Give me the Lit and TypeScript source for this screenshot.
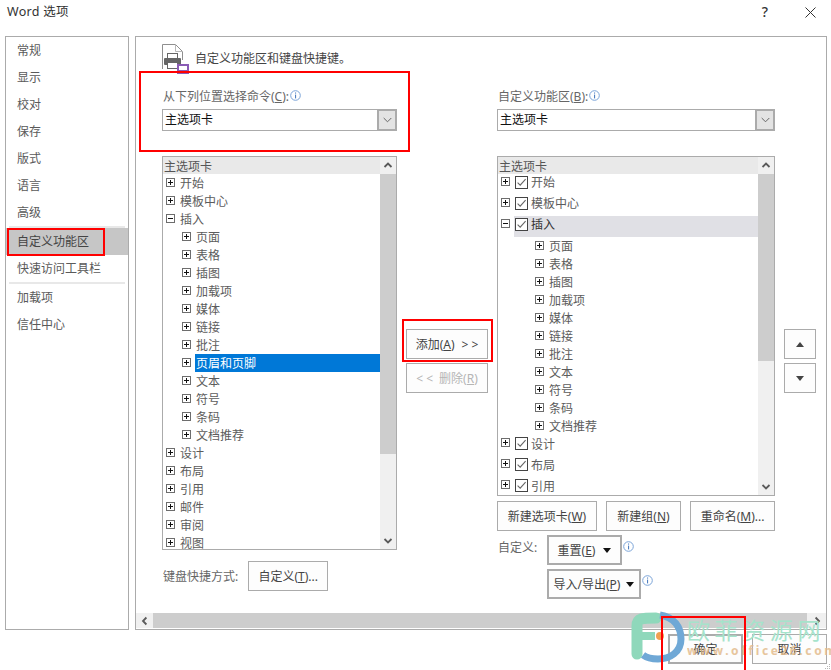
import { LitElement, html, css, svg, nothing } from "lit";
import { customElement } from "lit/decorators.js";

const NAV1 = ["常规", "显示", "校对", "保存", "版式", "语言", "高级"];
const SUB = ["页面", "表格", "插图", "加载项", "媒体", "链接", "批注", "页眉和页脚", "文本", "符号", "条码", "文档推荐"];
const SUB_R = SUB.filter((s) => s !== "页眉和页脚");
const TOP_BEFORE = ["开始", "模板中心"];
const TOP_AFTER_L = ["设计", "布局", "引用", "邮件", "审阅", "视图"];
const TOP_AFTER_R = ["设计", "布局", "引用"];

const info = () => html`<svg class="info" width="11" height="11" viewBox="0 0 11 11"><circle cx="5.5" cy="5.5" r="4.8" fill="none" stroke="#7ba4d8" stroke-width="1"/><rect x="5" y="2.5" width="1.1" height="1.1" fill="#4f7fc0"/><rect x="5" y="4.6" width="1.1" height="3.8" fill="#4f7fc0"/></svg>`;
const box = (open: boolean) => html`<svg class="exp" width="9" height="9" viewBox="0 0 9 9"><rect x=".5" y=".5" width="8" height="8" fill="#fff" stroke="#6d6d6d"/><rect x="2" y="4" width="5" height="1" fill="#111"/>${open ? nothing : svg`<rect x="4" y="2" width="1" height="5" fill="#111"/>`}</svg>`;
const check = () => html`<svg class="chk" width="13" height="13" viewBox="0 0 13 13"><rect x=".5" y=".5" width="12" height="12" fill="#fff" stroke="#444"/><path d="M2.6 6.6 5.2 9.2 10.6 3.2" fill="none" stroke="#666" stroke-width="1.1"/></svg>`;
const chev = (d: string) => {
  const p: Record<string, string> = {
    up: "M1.5 6 5 2.6 8.5 6",
    down: "M1.5 3 5 6.4 8.5 3",
    left: "M6.4 1.5 3 5 6.4 8.5",
    right: "M3.6 1.5 7 5 3.6 8.5",
  };
  return html`<svg width="10" height="10" viewBox="0 0 10 10"><path d="${p[d]}" fill="none" stroke="#5a5a5a" stroke-width="1.8"/></svg>`;
};
const comboArrow = () => html`<svg width="9" height="6" viewBox="0 0 9 6"><path d="M.7 1 4.5 4.8 8.3 1" fill="none" stroke="#666" stroke-width="1"/></svg>`;
const tri = (up: boolean) => html`<svg width="8" height="5" viewBox="0 0 8 5"><path d="${up ? "M4 0 8 5H0z" : "M0 0H8L4 5z"}" fill="#444"/></svg>`;
const caret = () => html`<svg class="caret" width="8" height="5" viewBox="0 0 8 5"><path d="M0 0H8L4 5z" fill="#111"/></svg>`;

@customElement("app-root")
export class AppRoot extends LitElement {
  static styles = css`
    :host { display: block; width: 831px; height: 670px; font-family: "Noto Sans", "Noto Sans CJK SC", sans-serif; font-size: 12px; color: #555; background: #fff; }
    * { box-sizing: border-box; }
    u { text-decoration: underline; text-underline-offset: 1px; }
    .dialog { position: relative; width: 831px; height: 670px; overflow: hidden; display: flex; flex-direction: column; }
    .title { height: 36px; flex: none; display: flex; align-items: center; padding: 0 15px 12px 7px; color: #333; line-height: 24px; }
    .title .name { flex: 1; font-size: 12.5px; letter-spacing: .3px; }
    .title .help { width: 12px; margin-right: 34px; font-size: 14px; color: #333; font-weight: 500; text-align: center; }
    .title svg { display: block; }
    .content { height: 594px; flex: none; display: flex; gap: 6px; padding-left: 5px; }
    .nav { width: 124px; border: 1px solid #ababab; display: flex; flex-direction: column; }
    .nav .item { height: 27px; line-height: 27px; padding-left: 11px; color: #5a5a5a; flex: none; }
    .nav .item.sel { background: #c6c6c6; color: #444; }
    .nav .sep { height: 2px; margin: 0 3px; background: #e8e8e8; flex: none; }
    .panel { width: 692px; border: 1px solid #ababab; display: flex; flex-direction: column; padding-bottom: 1px; }
    .pbody { flex: 1; min-height: 0; display: flex; padding-left: 26px; }
    .hbar { height: 15px; flex: none; display: flex; background: #cdcdcd; }
    .hbar .btn { background: #f0f0f0; display: flex; align-items: center; justify-content: center; }
    .hbar .l { width: 17px; }
    .hbar .th { flex: 1; }
    .hbar .r { width: 19px; }
    .col { display: flex; flex-direction: column; flex: none; }
    .left { width: 235px; }
    .mid { width: 100px; padding: 292px 0 0 9px; gap: 4px; }
    .right { width: 278px; }
    .arrows { width: 41px; padding: 292px 0 0 9px; gap: 4px; }
    .head { height: 37px; padding-top: 7px; display: flex; align-items: flex-start; }
    .head .ttl { margin-left: 5px; line-height: 30px; color: #444; }
    .head svg { display: block; flex: none; }
    .lab { height: 18px; margin-top: 14px; line-height: 18px; color: #666; display: flex; align-items: center; padding-left: 1px; gap: 1px; }
    .lab .info { margin-top: -3px; }
    .combo { height: 22px; margin-top: 3px; border: 1px solid #ababab; display: flex; align-items: stretch; flex: none; }
    .combo .v { flex: 1; padding-left: 2px; line-height: 20px; color: #111; }
    .combo .b { width: 19px; background: #e3e3e3; border: 1px solid #ababab; border-left-width: 2px; display: flex; align-items: center; justify-content: center; }
    .tree { margin-top: 25px; border: 1px solid #ababab; display: flex; flex: none; overflow: hidden; }
    .tree.l { height: 394px; }
    .tree.r { height: 340px; }
    .tbody { flex: 1; min-width: 0; overflow: hidden; display: flex; flex-direction: column; }
    .thead { height: 17px; line-height: 17px; flex: none; background: #e9e9e9; padding: 1px 0 0 1px; color: #555; }
    .sb { width: 16px; flex: none; display: flex; flex-direction: column; background: #f0f0f0; }
    .sb .a { height: 17px; flex: none; display: flex; align-items: center; justify-content: center; background: #f0f0f0; }
    .sb .t { background: #cdcdcd; flex: none; }
    .sb .g { flex: 1; }
    .row { height: 18px; flex: none; display: flex; line-height: 18px; color: #5c5c5c; }
    .row .exp { flex: none; margin-top: 4px; }
    .l .row { padding-left: 3px; }
    .l .row.s { padding-left: 19px; }
    .l .row .tx { margin-left: 5px; padding-top: 1px; }
    .l .row.s .tx { flex: 1; margin-left: 4px; padding-left: 1px; }
    .l .row.hl .tx { background: #0078d7; color: #fff; }
    .r .row { padding-left: 3px; }
    .r .row.t { height: 21px; line-height: 17px; }
    .r .row.t .exp { margin-top: 3px; }
    .r .row.t .chk { margin: 2px 3px 0 5px; flex: none; }
    .r .row.low .lb0 { padding-top: 1px; }
    .r .row.s { padding-left: 37px; }
    .r .row.s .tx { margin-left: 5px; padding-top: 1px; }
    .r .row.on .bg { flex: 1; display: flex; margin-left: 4px; background: #e0e0e5; color: #333; }
    .r .row.on .bg .chk { margin: 2px 3px 0 1px; }
    button { font: inherit; color: #444; background: #fdfdfd; border: 1px solid #ababab; padding: 0; height: 30px; display: flex; align-items: center; justify-content: center; white-space: nowrap; flex: none; }
    button.w82 { width: 82px; }
    button.dis { color: #b5b5b5; }
    button.sq { width: 32px; }
    button.thick { border: 2px solid #ababab; }
    .gapL { margin-left: 7px; }
    .gapR { margin-right: 6px; }
    .kbd { margin-top: 11px; height: 30px; display: flex; align-items: center; padding-left: 1px; gap: 10px; color: #666; }
    .kbd button { width: 80px; }
    .btns { display: flex; gap: 9px; margin-top: 5px; }
    .rn { height: 34px; margin-top: 4px; display: flex; }
    .rn .lb { width: 50px; padding: 4px 0 0 1px; line-height: 18px; color: #666; flex: none; }
    .rn button { width: 75px; gap: 8px; }
    .rn .info { margin: 6px 0 0 1px; }
    .rn2 { display: flex; padding-left: 50px; }
    .rn2 button { width: 94px; gap: 6px; }
    .rn2 .info { margin: 6px 0 0 1px; }
    .foot { display: flex; justify-content: flex-end; gap: 9px; padding-right: 4px; margin-top: 4px; }
    .foot button { width: 75px; }
    .red { position: absolute; border: 2px solid #f00; pointer-events: none; }
    .wm { position: absolute; left: 628px; top: 608px; width: 203px; height: 62px; pointer-events: none; }
    .wm svg { position: absolute; left: 0; top: 0; }
    .wm .cn { position: absolute; left: 59px; top: 7px; font-size: 23px; line-height: 30px; color: #a6e3cb; white-space: nowrap; letter-spacing: 4.6px; }
    .wm .en { position: absolute; left: 59px; top: 36px; font-size: 12px; line-height: 14px; font-weight: 700; color: #e2b886; white-space: nowrap; letter-spacing: 2.6px; opacity: .8; }
    .grip { position: absolute; right: 0; bottom: 0; display: block; }
  `;

  private leftRow(t: string, sub = false, open = false, hl = false) {
    return html`<div class="row ${sub ? "s" : ""} ${hl ? "hl" : ""}">${box(open)}<span class="tx">${t}</span></div>`;
  }

  private rightTop(t: string, open = false, low = false) {
    if (open) {
      return html`<div class="row t on">${box(true)}<div class="bg">${check()}<span class="lb0">${t}</span></div></div>`;
    }
    return html`<div class="row t ${low ? "low" : ""}">${box(false)}${check()}<span class="lb0">${t}</span></div>`;
  }

  render() {
    return html`
      <div class="dialog">
        <div class="title">
          <span class="name">Word 选项</span>
          <span class="help">?</span>
          <svg width="11" height="11" viewBox="0 0 11 11"><path d="M.5.5 10.5 10.5M10.5.5.5 10.5" stroke="#333" stroke-width="1" fill="none"/></svg>
        </div>
        <div class="content">
          <div class="nav">
            ${NAV1.map((n) => html`<div class="item">${n}</div>`)}
            <div class="sep"></div>
            <div class="item sel">自定义功能区</div>
            <div class="item">快速访问工具栏</div>
            <div class="sep"></div>
            <div class="item">加载项</div>
            <div class="item">信任中心</div>
          </div>
          <div class="panel">
            <div class="pbody">
              <div class="col left">
                <div class="head">
                  <svg width="28" height="30" viewBox="0 0 28 30">
                    <path d="M.5 25V.5H13.5L20.5 7.5V16" fill="#fff" stroke="#8f8f8f"/>
                    <path d="M13.5 .5V7.5H20.5" fill="none" stroke="#b8b8b8"/>
                    <rect x="5.5" y="9.5" width="10" height="5" fill="#fff" stroke="#666"/>
                    <rect x="2" y="14" width="17" height="7" rx="1" fill="#666"/>
                    <rect x="5.5" y="18.5" width="10" height="6" fill="#fff" stroke="#666"/>
                    <rect x="15" y="20" width="12" height="10" fill="#8a5bb5"/>
                    <rect x="17" y="22" width="8" height="4" fill="#fff"/>
                    <rect x="17" y="27.5" width="3" height="1.5" fill="#fff"/>
                    <rect x="22" y="27.5" width="3" height="1.5" fill="#fff"/>
                  </svg>
                  <span class="ttl">自定义功能区和键盘快捷键。</span>
                </div>
                <div class="lab"><span>从下列位置选择命令(<u>C</u>):</span>${info()}</div>
                <div class="combo"><span class="v">主选项卡</span><span class="b">${comboArrow()}</span></div>
                <div class="tree l">
                  <div class="tbody">
                    <div class="thead">主选项卡</div>
                    ${TOP_BEFORE.map((t) => this.leftRow(t))}
                    ${this.leftRow("插入", false, true)}
                    ${SUB.map((t) => this.leftRow(t, true, false, t === "页眉和页脚"))}
                    ${TOP_AFTER_L.map((t) => this.leftRow(t))}
                  </div>
                  <div class="sb">
                    <div class="a">${chev("up")}</div>
                    <div class="t" style="height:280px"></div>
                    <div class="g"></div>
                    <div class="a">${chev("down")}</div>
                  </div>
                </div>
                <div class="kbd"><span>键盘快捷方式:</span><button>自定义(<u>T</u>)...</button></div>
              </div>
              <div class="col mid">
                <button class="w82">添加(<u>A</u>)<span class="gapL">&gt; &gt;</span></button>
                <button class="w82 dis"><span class="gapR">&lt; &lt;</span>删除(<u>R</u>)</button>
              </div>
              <div class="col right">
                <div class="head"></div>
                <div class="lab"><span>自定义功能区(<u>B</u>):</span>${info()}</div>
                <div class="combo"><span class="v">主选项卡</span><span class="b">${comboArrow()}</span></div>
                <div class="tree r">
                  <div class="tbody">
                    <div class="thead">主选项卡</div>
                    ${TOP_BEFORE.map((t) => this.rightTop(t))}
                    ${this.rightTop("插入", true)}
                    ${SUB_R.map((t) => html`<div class="row s">${box(false)}<span class="tx">${t}</span></div>`)}
                    ${TOP_AFTER_R.map((t) => this.rightTop(t, false, true))}
                  </div>
                  <div class="sb">
                    <div class="a">${chev("up")}</div>
                    <div class="t" style="height:187px"></div>
                    <div class="g"></div>
                    <div class="a">${chev("down")}</div>
                  </div>
                </div>
                <div class="btns">
                  <button style="width:100px">新建选项卡(<u>W</u>)</button>
                  <button style="width:75px">新建组(<u>N</u>)</button>
                  <button style="width:85px">重命名(<u>M</u>)...</button>
                </div>
                <div class="rn">
                  <span class="lb">自定义:</span>
                  <button class="thick"><span>重置(<u>E</u>)</span>${caret()}</button>
                  ${info()}
                </div>
                <div class="rn2">
                  <button class="thick"><span>导入/导出(<u>P</u>)</span>${caret()}</button>
                  ${info()}
                </div>
              </div>
              <div class="col arrows">
                <button class="sq">${tri(true)}</button>
                <button class="sq">${tri(false)}</button>
              </div>
            </div>
            <div class="hbar">
              <div class="btn l">${chev("left")}</div>
              <div class="th"></div>
              <div class="btn r">${chev("right")}</div>
            </div>
          </div>
        </div>
        <div class="foot">
          <button class="thick">确定</button>
          <button>取消</button>
        </div>

        <div class="wm">
          <svg width="58" height="62" viewBox="0 0 58 62">
            <path d="M9 46V18C9 10 14 10 28 10" fill="none" stroke="#8fd8bb" stroke-width="11" stroke-linecap="round"/>
            <path d="M14 28H27" fill="none" stroke="#8fd8bb" stroke-width="8"/>
            <path d="M32 7C46 9 53 19 53 31C53 44 42 51 30 51C24 51 19 50 15 47" fill="none" stroke="#6fa8d6" stroke-width="7"/>
            <circle cx="32" cy="28" r="4" fill="#f0a050"/>
          </svg>
          <span class="cn">欧菲资源网</span>
          <span class="en">www.office26.com</span>
        </div>

        <div class="red" style="left:139px;top:71px;width:271px;height:81px"></div>
        <div class="red" style="left:7px;top:228px;width:98px;height:28px"></div>
        <div class="red" style="left:402px;top:319px;width:91px;height:43px"></div>
        <div class="red" style="left:661px;top:616px;width:85px;height:60px"></div>

        <svg class="grip" width="6" height="6" viewBox="0 0 6 6"><path d="M4 0h1v1H4zM2 2h1v1H2zM4 2h1v1H4zM0 4h1v1H0zM2 4h1v1H2zM4 4h1v1H4z" fill="#b5b5b5"/></svg>
      </div>
    `;
  }
}
